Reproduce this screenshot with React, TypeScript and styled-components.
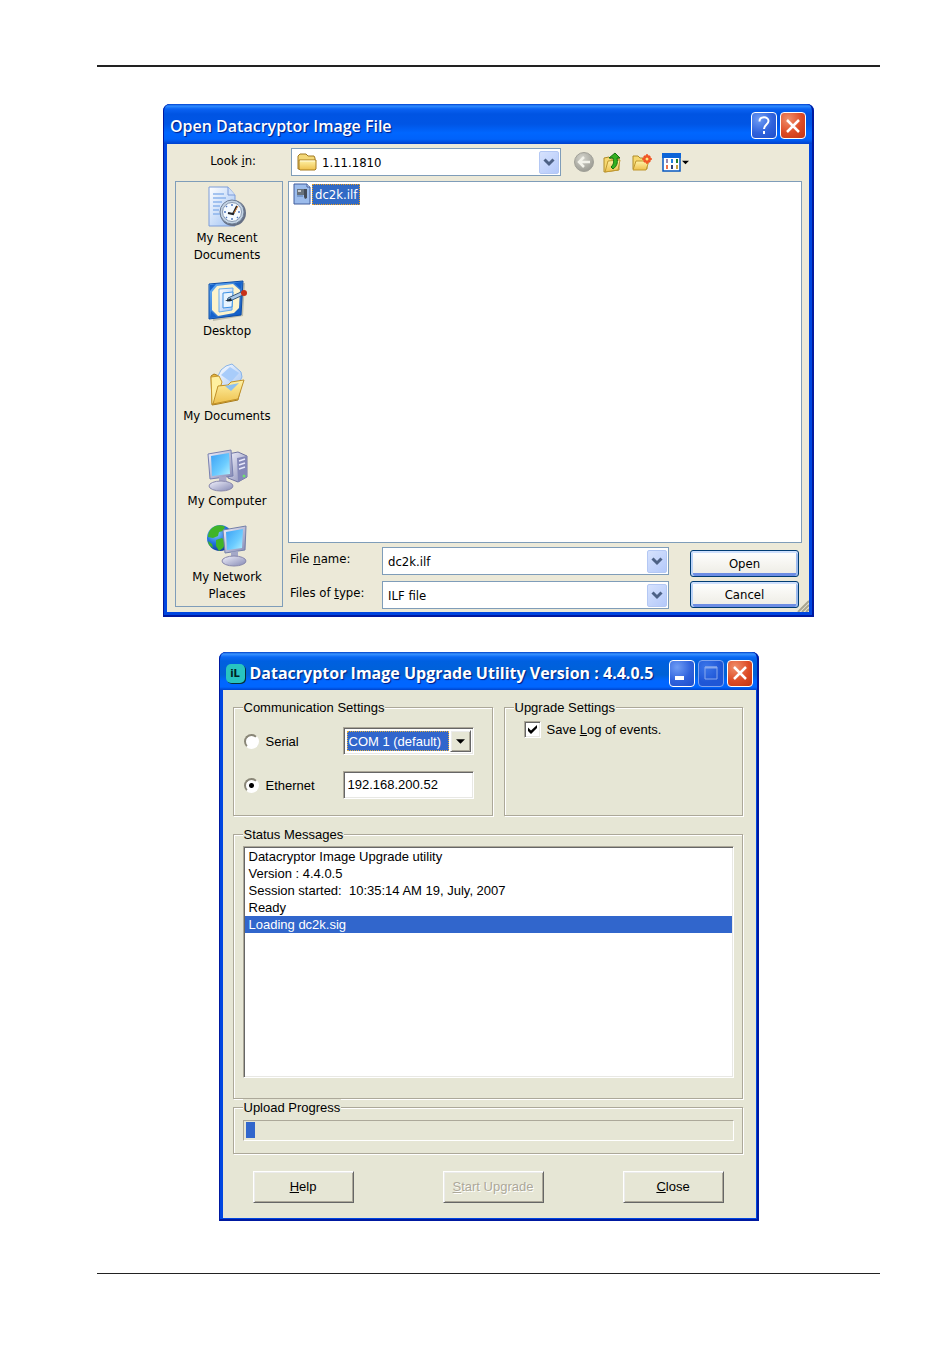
import React, { useState } from "react";
import styled, { createGlobalStyle, css } from "styled-components";

const GlobalStyle = createGlobalStyle`
  * { box-sizing: border-box; }
  body { margin: 0; background: #fff; color: #000; }
  button, input, select { font: inherit; color: inherit; margin: 0; }
`;

const tahoma = `"DejaVu Sans Condensed", "DejaVu Sans", sans-serif`;
const msSans = `"Liberation Sans", Arial, sans-serif`;

/* ---------- page ---------- */

const Page = styled.main`
  display: flex;
  flex-direction: column;
  align-items: center;
  padding: 65px 70px 86px 97px;
`;

const Rule = styled.hr`
  width: 100%;
  height: 2px;
  margin: 0;
  border: 0;
  background: #222;
`;

const BottomRule = styled(Rule)`
  height: 1px;
  margin-top: 52px;
`;

/* ---------- window chrome ---------- */

const Window = styled.section<{ $width: number; $gap: number; $edge: number }>`
  display: flex;
  flex-direction: column;
  position: relative;
  width: 100%;
  max-width: ${(p) => p.$width}px;
  margin-top: ${(p) => p.$gap}px;
  border: solid #0046e0;
  border-width: 0 ${(p) => p.$edge}px ${(p) => p.$edge}px 4px;
  border-radius: 7px 7px 0 0;
  background: #0046e0;

  &::after {
    content: "";
    position: absolute;
    inset: 0 -${(p) => p.$edge}px -${(p) => p.$edge}px -4px;
    border: solid #0019a0;
    border-width: 0 2px 2px 1px;
    border-radius: 7px 7px 0 0;
    pointer-events: none;
  }

  > header { margin: 0 -${(p) => p.$edge}px 0 -4px; }
`;

const TitleBar = styled.header<{ $height: number; $flat?: boolean }>`
  display: flex;
  align-items: center;
  gap: 3px;
  height: ${(p) => p.$height}px;
  padding: ${(p) => (p.$flat ? "4px 6px 0 7px" : "3px 8px 0 7px")};
  border-radius: 7px 7px 0 0;
  background: ${(p) =>
    p.$flat
      ? "linear-gradient(#0040c8 0, #3a94ff 2px, #0a68f4 5px, #0060e0 9px, #0062d6 60%, #0066ff 76%, #0066ff 92%, #0044cc)"
      : "linear-gradient(#0040d0 0, #2f8cff 2px, #0a62f2 5px, #0054e3 10px, #0055e5 50%, #0066ff 72%, #0062fa 88%, #0040cc)"};
`;

const Title = styled.h1<{ $weight: number }>`
  flex: 1;
  margin: 0;
  font: ${(p) => p.$weight} 16px/24px "Open Sans", sans-serif;
  color: #fff;
  text-shadow: 1px 1px 1px #001a80;
  white-space: nowrap;
`;

const captionTones = {
  blue: "radial-gradient(circle at 30% 25%, #6f9df5, #2f62dc 55%, #1f4ecb)",
  dim: "radial-gradient(circle at 30% 25%, #3b76ea, #1f56d6 60%)",
  red: "radial-gradient(circle at 30% 25%, #f0906c, #dd4b25 55%, #c23414)",
};

const CaptionButton = styled.button<{ $tone: keyof typeof captionTones }>`
  display: grid;
  place-items: center;
  width: 26px;
  height: 27px;
  padding: 0;
  border: 1px solid ${(p) => (p.$tone === "dim" ? "#7fa4f0" : "#fff")};
  border-radius: 4px;
  background: ${(p) => captionTones[p.$tone]};
`;

/* ---------- open dialog ---------- */

const OpenBody = styled.form`
  display: grid;
  grid-template-columns: 108px minmax(0, 1fr);
  grid-template-rows: 37px 426px;
  column-gap: 5px;
  padding: 0 7px 5px 8px;
  background: #ece9d8;
  font: 13px/17px ${tahoma};
`;

const LookLabel = styled.label`
  align-self: center;
  padding: 0 27px 4px 0;
  text-align: right;
`;

const LookRow = styled.div`
  display: flex;
  align-items: center;
  padding: 0 0 1px 3px;
`;

const Field = styled.div`
  display: flex;
  align-items: center;
  width: 287px;
  height: 28px;
  padding: 1px 1px 1px 5px;
  border: 1px solid #7f9db9;
  background: #fff;

  input, select {
    flex: 1;
    min-width: 0;
    height: 24px;
    padding: 0;
    border: 0;
    outline: 0;
    background: transparent;
    appearance: none;
  }
`;

const LookField = styled(Field)`
  width: 270px;
  select { padding-left: 5px; }
`;

const DropArrow = styled.span`
  display: grid;
  place-items: center;
  width: 20px;
  height: 23px;
  border: 1px solid #b4c8f4;
  border-radius: 2px;
  background: linear-gradient(135deg, #d6e2fd, #b4c9fa);
`;

const Tools = styled.div`
  display: flex;
  align-items: center;
  gap: 9px;
  margin-left: 13px;
`;

const ToolButton = styled.button`
  display: flex;
  align-items: center;
  gap: 1px;
  padding: 0;
  border: 0;
  background: none;
`;

const Places = styled.nav`
  display: grid;
  grid-template-rows: repeat(5, 1fr);
  border: 1px solid #7f9db9;
`;

const Place = styled.a`
  display: flex;
  flex-direction: column;
  align-items: center;
  justify-content: center;
  padding: 0 12px 1px 8px;
  color: #000;
  text-align: center;
  text-decoration: none;

  svg { flex: none; }
  span { margin: 0 -8px; }
`;

const Main = styled.div`
  display: grid;
  grid-template-rows: 362px auto;
  row-gap: 4px;
`;

const FileList = styled.ul`
  margin: 0;
  padding: 1px 4px;
  border: 1px solid #7f9db9;
  background: #fff;
  list-style: none;
`;

const FileItem = styled.button`
  display: flex;
  align-items: center;
  gap: 1px;
  padding: 0;
  border: 0;
  background: none;
  color: #fff;

  span {
    height: 21px;
    padding: 1px 2px;
    border: 1px dotted #f0a020;
    background: #316ac5;
  }
`;

const Footer = styled.div`
  display: flex;
  justify-content: space-between;
  padding: 0 3px 0 2px;
`;

const Fields = styled.div`
  display: grid;
  grid-template-columns: 92px 287px;
  row-gap: 6px;
  label { padding-top: 3px; white-space: nowrap; }
`;

const Actions = styled.div`
  display: flex;
  flex-direction: column;
  gap: 4px;
  padding-top: 3px;
`;

const XpButton = styled.button`
  width: 109px;
  height: 27px;
  padding: 0;
  border: 1px solid #003c74;
  border-radius: 3px;
  background: linear-gradient(#fff, #f4f3ee 60%, #ecebe4);
  box-shadow: inset 0 2px #cfe0fd, inset 2px 0 #bcd4f8, inset -2px 0 #9dbbee, inset 0 -3px #6d8de4;
`;

const Grip = styled.svg`
  position: absolute;
  right: 0;
  bottom: 0;
`;

/* ---------- upgrade utility ---------- */

const UtilityBody = styled.form`
  display: flex;
  flex-direction: column;
  padding: 9px 13px 15px 10px;
  background: #e6e6d5;
  font: 13px/17px ${msSans};
`;

const Columns = styled.div`
  display: grid;
  grid-template-columns: 260px minmax(0, 1fr);
  gap: 11px;
  margin-bottom: 10px;
`;

const Group = styled.fieldset`
  min-width: 0;
  margin: 0;
  padding: 0 8px 0 9px;
  border: 1px solid #aca899;
  box-shadow: 1px 1px #fff, inset 1px 1px #fff;

  legend {
    padding: 0 1px;
    background: #e6e6d5;
    line-height: 17px;
  }
`;

const SettingsGroup = styled(Group)`height: 117px;`;
const StatusGroup = styled(Group)`padding-bottom: 20px;`;
const ProgressGroup = styled(Group)`padding-bottom: 12px;`;

const CommGrid = styled.div`
  display: grid;
  grid-template-columns: 100px 131px;
  row-gap: 16px;
  align-items: center;
  padding-top: 11px;
`;

const Choice = styled.label`
  display: flex;
  align-items: center;
  gap: 7px;
  padding-left: 1px;
`;

const CheckChoice = styled(Choice)`
  gap: 6px;
  padding: 5px 10px;
`;

const sunken = css`
  border: 1px solid;
  border-color: #aca899 #fff #fff #aca899;
  box-shadow: inset 1px 1px #666, inset -1px -1px #e8e8e4;
`;

const Radio = styled.input`
  appearance: none;
  width: 15px;
  height: 15px;
  border: 2px solid;
  border-color: #8a8778 #fff #fff #8a8778;
  border-radius: 50%;
  background: #fff;

  &:checked { background: radial-gradient(circle, #000 2px, #fff 3px); }
`;

const Check = styled.input`
  appearance: none;
  width: 17px;
  height: 17px;
  ${sunken}
  background: #fff;

  &:checked {
    background: #fff url("data:image/svg+xml,%3Csvg xmlns='http://www.w3.org/2000/svg' viewBox='0 0 15 15'%3E%3Cpath d='M3 5.5v3.5l3 3 6-6V3L6 8.5z'/%3E%3C/svg%3E") center / 15px 15px;
  }
`;

const SunkenBox = styled.div`
  display: flex;
  height: 28px;
  padding: 2px;
  ${sunken}
  background: #fff;

  input, select {
    flex: 1;
    min-width: 0;
    padding: 0 2px 2px;
    border: 0;
    outline: 0;
    background: transparent;
    appearance: none;
  }
  select {
    margin: 1px;
    padding: 0 1px;
    border: 1px dotted #e0b040;
    background: #3166cc;
    color: #fff;
  }
`;

const raised = css`
  border: 1px solid;
  border-color: #fff #666 #666 #fff;
  background: #e6e6d5;
  box-shadow: inset 1px 1px #ebebeb, inset -1px -1px #aca899;
`;

const ClassicArrow = styled.span`
  display: grid;
  place-items: center;
  width: 21px;
  ${raised}
`;

const MessageList = styled.ul`
  height: 232px;
  margin: 3px 0 0;
  padding: 1px;
  ${sunken}
  background: #fff;
  list-style: none;
`;

const Message = styled.li<{ $selected: boolean }>`
  height: 17px;
  padding: 0 4px;
  line-height: 17px;
  white-space: pre;
  background: ${(p) => (p.$selected ? "#3166cc" : "transparent")};
  color: ${(p) => (p.$selected ? "#fff" : "#000")};
`;

const Meter = styled.progress`
  display: block;
  appearance: none;
  width: 100%;
  height: 21px;
  margin-top: 4px;
  padding: 1px 2px 2px;
  border: 1px solid;
  border-color: #aca899 #fff #fff #aca899;
  background: transparent;

  &::-webkit-progress-bar { background: transparent; }
  &::-webkit-progress-value { background: #3166cc; }
`;

const ButtonRow = styled.div`
  display: grid;
  grid-template-columns: 190px 180px auto;
  margin-top: 17px;
  padding-left: 20px;
`;

const ClassicButton = styled.button`
  width: 101px;
  height: 32px;
  padding: 0 0 2px;
  ${raised}

  &:disabled { color: #aca899; text-shadow: 1px 1px #fff; }
`;

/* ---------- icons ---------- */

const Gradients = () => (
  <svg width="0" height="0" style={{ display: "block" }} aria-hidden="true">
    <defs>
      <linearGradient id="paper" x1="0" y1="0" x2="1" y2="1">
        <stop offset="0" stopColor="#fff" /><stop offset="1" stopColor="#9cc0f4" />
      </linearGradient>
      <linearGradient id="folder" x1="0" y1="0" x2="0" y2="1">
        <stop offset="0" stopColor="#fff3a8" /><stop offset="1" stopColor="#eec04c" />
      </linearGradient>
      <linearGradient id="screen" x1="0" y1="0" x2="1" y2="1">
        <stop offset="0" stopColor="#3aa0f4" /><stop offset=".6" stopColor="#6cccff" /><stop offset="1" stopColor="#b4f0ff" />
      </linearGradient>
      <linearGradient id="metal" x1="0" y1="0" x2="1" y2="1">
        <stop offset="0" stopColor="#f2f2fc" /><stop offset="1" stopColor="#8488b4" />
      </linearGradient>
      <linearGradient id="blotter" x1="0" y1="0" x2="1" y2="1">
        <stop offset="0" stopColor="#6cb4f8" /><stop offset="1" stopColor="#0a50b8" />
      </linearGradient>
      <radialGradient id="globe" cx=".35" cy=".3" r=".8">
        <stop offset="0" stopColor="#8cd0ff" /><stop offset=".5" stopColor="#2474e0" /><stop offset="1" stopColor="#0a2c90" />
      </radialGradient>
      <radialGradient id="grey" cx=".4" cy=".3" r=".8">
        <stop offset="0" stopColor="#d4d4cc" /><stop offset="1" stopColor="#94948c" />
      </radialGradient>
    </defs>
  </svg>
);

const PlaceIcon = ({ children }: { children: React.ReactNode }) => (
  <svg width="44" height="44" viewBox="0 0 44 44" aria-hidden="true">{children}</svg>
);

const RecentIcon = () => (
  <PlaceIcon>
    <path d="M4 2h19l7 8v31H4z" fill="url(#paper)" stroke="#7c9cd8" />
    <path d="M23 2v8h7" fill="#cfe0fa" stroke="#7c9cd8" />
    <path d="M8 9h11M8 13h13M8 17h9M8 21h7M8 25h6M8 29h7" stroke="#8cb4ec" strokeWidth="1.5" />
    <circle cx="28" cy="28" r="13" fill="#667084" />
    <circle cx="27" cy="27" r="12" fill="#c4d4e4" stroke="#708098" />
    <circle cx="27" cy="27" r="9.5" fill="#f4faff" stroke="#8898b0" />
    <path d="M27 19v2M27 33v2M19 27h2M33 27h2M21 21l1 1M32 32l1 1M21 33l1-1" stroke="#5078c0" strokeWidth="1.5" />
    <path d="M23 28l5 1 4-8" fill="none" stroke="#20242c" strokeWidth="2" />
    <path d="M33 21l-4 7" stroke="#e08838" />
  </PlaceIcon>
);

const DesktopIcon = () => (
  <PlaceIcon>
    <path d="M6 8l34-3-2 33-30 5z" fill="#a8a898" opacity=".7" />
    <path d="M4 6l34-3-2 34-32 4z" fill="url(#blotter)" stroke="#0a4ca8" />
    <path d="M5 7l6-1-6 7zM37 4l-1 7-7-6zM5 40l1-7 6 6zM35 36l-7 1 7-6z" fill="#1462cc" />
    <path d="M12 8l16-2 7 6-1 18-5 5-16 3-6-6V14z" fill="#fdf4cc" />
    <path d="M14 11l14-1-1 22-13 2z" fill="url(#paper)" stroke="#68acec" />
    <path d="M18 15l10-1-1 15-9 1z" fill="#e8f4ff" stroke="#3c90e4" />
    <path d="M23 20l13-6 2 3-13 6h-3z" fill="#a8c8e8" stroke="#385878" />
    <path d="M20 23l6-3 1 3z" fill="#182838" />
    <circle cx="39" cy="15" r="3" fill="#c83018" />
  </PlaceIcon>
);

const DocumentsIcon = () => (
  <PlaceIcon>
    <path d="M6 13l3-2 5 2 1 4 18-1 4 3-4 18-20 4-6 1z" fill="#e8b83c" stroke="#a87c20" />
    <path d="M13 13l3-6 5-4 6-2 9 8 1 5-5 10-13 5z" fill="url(#paper)" stroke="#88b4e8" />
    <path d="M16 12l9-8 9 6-8 9z" fill="#a8ccfa" />
    <path d="M6 14l8-1 3 6-7 21-3 1z" fill="#fff0a0" stroke="#c89830" />
    <path d="M13 23l10-1 3-3 13-2-6 19-25 5z" fill="url(#folder)" stroke="#c09028" />
    <path d="M20 23l14-3-8 8z" fill="#8cc0f0" />
  </PlaceIcon>
);

const ComputerIcon = () => (
  <PlaceIcon>
    <path d="M23 6l10-2 9 4v21l-9 5-10-4z" fill="url(#metal)" stroke="#7074a0" />
    <path d="M32 10l10-2v21l-9 5z" fill="#8488b8" />
    <path d="M34 13l6-2M34 17l6-2M34 21l6-2" stroke="#e8e8fa" strokeWidth="1.5" />
    <circle cx="39" cy="28" r="1.500" fill="#70e070" />
    <path d="M3 6l23-4 2 26-23 3z" fill="url(#metal)" stroke="#7880b0" />
    <path d="M6 8l18-3 1 21-18 2z" fill="url(#screen)" />
    <path d="M14 29l7-1 1 8h-8z" fill="#a8a8c8" />
    <ellipse cx="16" cy="38" rx="12" ry="5" fill="url(#metal)" stroke="#8888ac" />
  </PlaceIcon>
);

const NetworkIcon = () => (
  <PlaceIcon>
    <circle cx="15" cy="14" r="13" fill="url(#globe)" />
    <path d="M6 5c5-5 12-4 14-2l-2 4-4 1-1 4-5 2-5-1c0-3 1-6 3-8zM11 16l6-2 4 4-3 6-4 3-3-5zM3 17l4 3 1 4-4-3z" fill="#40b428" />
    <path d="M18 6l23-4-1 24-20 3z" fill="url(#metal)" stroke="#7480a8" />
    <path d="M21 8l17-3-1 19-15 2z" fill="url(#screen)" />
    <path d="M26 28l7-1v8h-7z" fill="#a4a8c8" />
    <ellipse cx="29" cy="37" rx="12" ry="5" fill="url(#metal)" stroke="#8888ac" />
  </PlaceIcon>
);

const FolderIcon = () => (
  <svg width="20" height="18" viewBox="0 0 20 18" aria-hidden="true">
    <path d="M1 3l2-2h6l2 2h6l1 2v11H1z" fill="#f4d878" stroke="#a07820" />
    <path d="M2 7h17v9l-1 1H3l-1-1z" fill="url(#folder)" stroke="#a87c20" />
    <path d="M3 8h15" stroke="#fffbe0" />
  </svg>
);

const FileIcon = () => (
  <svg width="18" height="22" viewBox="0 0 18 22" aria-hidden="true">
    <path d="M1 1h13l3 3v17H1z" fill="#9cbcec" stroke="#405c9c" />
    <path d="M14 1v3h3" fill="#dce8fa" stroke="#405c9c" />
    <path d="M4 6h7v6H4z" fill="#68727c" /><path d="M5 7h3v2H5z" fill="#c8ccd0" />
    <path d="M11 6h3v9l-2 1-1-2z" fill="#444c58" /><path d="M4 13h6" stroke="#5478b0" />
  </svg>
);

const Chevron = () => (
  <svg width="12" height="9" viewBox="0 0 12 9" aria-hidden="true">
    <path d="M1.5 1.5L6 6l4.500-4.500" fill="none" stroke="#4d6185" strokeWidth="3" />
  </svg>
);

const Triangle = ({ width }: { width: number }) => (
  <svg width={width} height="5" viewBox="0 0 8 4" aria-hidden="true"><path d="M0 0h8L4 4z" /></svg>
);

const BackIcon = () => (
  <svg width="20" height="20" viewBox="0 0 20 20" aria-hidden="true">
    <circle cx="10" cy="10" r="9.500" fill="url(#grey)" stroke="#a0a098" />
    <path d="M16 10H6M10 5l-5 5 5 5" fill="none" stroke="#f2f2ea" strokeWidth="2.500" />
  </svg>
);

const UpIcon = () => (
  <svg width="20" height="21" viewBox="0 0 20 21" aria-hidden="true">
    <path d="M1 6l5-1 2 2 8-1v12L1 20z" fill="#f6d870" stroke="#b08c28" />
    <path d="M2 20l3-11 12-1-2 10z" fill="url(#folder)" stroke="#c09830" />
    <path d="M6 6l6-5 5 5h-3c1 5 0 8-4 11l-2-2c3-3 3-5 2-9z" fill="#34b020" stroke="#147010" />
  </svg>
);

const NewFolderIcon = () => (
  <svg width="21" height="18" viewBox="0 0 21 18" aria-hidden="true">
    <path d="M1 3h5l2 2h7v11H1z" fill="#f6d870" stroke="#b08c28" />
    <path d="M1 17L4 8h13l-3 9z" fill="url(#folder)" stroke="#c09830" />
    <circle cx="15" cy="6" r="4" fill="#f46838" />
    <path d="M15 1v10M10 6h10M12 3l6 6M18 3l-6 6" stroke="#f05020" strokeWidth="1.500" />
    <circle cx="15" cy="6" r="1.500" fill="#ffe880" />
  </svg>
);

const ViewsIcon = () => (
  <svg width="19" height="19" viewBox="0 0 19 19" aria-hidden="true">
    <path d="M1 1h17v17H1z" fill="#fff" stroke="#0858c0" strokeWidth="1.500" />
    <path d="M0 0h19v5H0z" fill="#0c64d8" />
    <path d="M4 6h2v4H4z" fill="#9888b0" /><path d="M9 6h2v4H9z" fill="#2080e0" /><path d="M14 6h2v4h-2z" fill="#208030" />
    <path d="M4 12h2v4H4z" fill="#f07048" /><path d="M9 12h2v4H9z" fill="#304078" /><path d="M14 12h2v4h-2z" fill="#c8a040" />
  </svg>
);

const HelpGlyph = () => (
  <svg width="16" height="19" viewBox="0 0 16 19" aria-hidden="true">
    <path d="M3.500 5.500C3.500 0 12.500 0 12.500 5c0 3.500-4.500 3.500-4.500 8" fill="none" stroke="#fff" strokeWidth="2" />
    <path d="M7 15h2v3H7z" fill="#fff" />
  </svg>
);

const CloseGlyph = () => (
  <svg width="16" height="16" viewBox="0 0 16 16" aria-hidden="true">
    <path d="M2 2l12 12M14 2L2 14" stroke="#fff" strokeWidth="2.500" />
  </svg>
);

const MinimizeGlyph = () => (
  <svg width="16" height="16" viewBox="0 0 16 16" aria-hidden="true"><path d="M1 11h9v4H1z" fill="#fff" /></svg>
);

const MaximizeGlyph = () => (
  <svg width="16" height="16" viewBox="0 0 16 16" aria-hidden="true">
    <path d="M2 2h12v12H2z" fill="none" stroke="#88a8ec" /><path d="M2 2.500h12" stroke="#88a8ec" strokeWidth="2" />
  </svg>
);

const AppBadge = styled.span`
  display: grid;
  place-items: center;
  width: 19px;
  height: 19px;
  margin-right: 2px;
  border-radius: 5px;
  background: #28c4c0;
  box-shadow: 1px 1px #063038;
  color: #022;
  font: bold 11px/19px ${tahoma};
`;

/* ---------- content ---------- */

const places = [
  { name: "My Recent Documents", Icon: RecentIcon },
  { name: "Desktop", Icon: DesktopIcon },
  { name: "My Documents", Icon: DocumentsIcon },
  { name: "My Computer", Icon: ComputerIcon },
  { name: "My Network Places", Icon: NetworkIcon },
];

const messages = [
  "Datacryptor Image Upgrade utility",
  "Version : 4.4.0.5",
  "Session started:  10:35:14 AM 19, July, 2007",
  "Ready",
  "Loading dc2k.sig",
];

const OpenDialog = () => (
  <Window $width={651} $gap={37} $edge={5}>
    <TitleBar $height={40}>
      <Title $weight={600}>Open Datacryptor Image File</Title>
      <CaptionButton $tone="blue" aria-label="Help"><HelpGlyph /></CaptionButton>
      <CaptionButton $tone="red" aria-label="Close"><CloseGlyph /></CaptionButton>
    </TitleBar>
    <OpenBody onSubmit={(e) => e.preventDefault()}>
      <LookLabel htmlFor="look">Look <u>i</u>n:</LookLabel>
      <LookRow>
        <LookField>
          <FolderIcon />
          <select id="look"><option>1.11.1810</option></select>
          <DropArrow><Chevron /></DropArrow>
        </LookField>
        <Tools>
          <ToolButton type="button" aria-label="Back"><BackIcon /></ToolButton>
          <ToolButton type="button" aria-label="Up one level"><UpIcon /></ToolButton>
          <ToolButton type="button" aria-label="New folder"><NewFolderIcon /></ToolButton>
          <ToolButton type="button" aria-label="Views"><ViewsIcon /><Triangle width={7} /></ToolButton>
        </Tools>
      </LookRow>
      <Places>
        {places.map(({ name, Icon }) => (
          <Place href="#" key={name}><Icon /><span>{name}</span></Place>
        ))}
      </Places>
      <Main>
        <FileList>
          <li><FileItem type="button"><FileIcon /><span>dc2k.ilf</span></FileItem></li>
        </FileList>
        <Footer>
          <Fields>
            <label htmlFor="name">File <u>n</u>ame:</label>
            <Field><input id="name" defaultValue="dc2k.ilf" /><DropArrow><Chevron /></DropArrow></Field>
            <label htmlFor="type">Files of <u>t</u>ype:</label>
            <Field><select id="type"><option>ILF file</option></select><DropArrow><Chevron /></DropArrow></Field>
          </Fields>
          <Actions>
            <XpButton>Open</XpButton>
            <XpButton type="button">Cancel</XpButton>
          </Actions>
        </Footer>
      </Main>
    </OpenBody>
    <Grip width="12" height="12" viewBox="0 0 12 12" aria-hidden="true">
      <path d="M1 12L12 1M5 12l7-7M9 12l3-3" stroke="#a8a590" strokeWidth="2" />
    </Grip>
  </Window>
);

const UpgradeUtility = () => {
  const [link, setLink] = useState("ethernet");
  return (
    <Window $width={540} $gap={35} $edge={3}>
      <TitleBar $height={38} $flat>
        <AppBadge>iL</AppBadge>
        <Title $weight={700}>Datacryptor Image Upgrade Utility Version : 4.4.0.5</Title>
        <CaptionButton $tone="blue" aria-label="Minimize"><MinimizeGlyph /></CaptionButton>
        <CaptionButton $tone="dim" aria-label="Maximize"><MaximizeGlyph /></CaptionButton>
        <CaptionButton $tone="red" aria-label="Close"><CloseGlyph /></CaptionButton>
      </TitleBar>
      <UtilityBody onSubmit={(e) => e.preventDefault()}>
        <Columns>
          <SettingsGroup>
            <legend>Communication Settings</legend>
            <CommGrid>
              <Choice>
                <Radio type="radio" name="link" checked={link === "serial"} onChange={() => setLink("serial")} />
                Serial
              </Choice>
              <SunkenBox>
                <select aria-label="Serial port"><option>COM 1 (default)</option></select>
                <ClassicArrow><Triangle width={9} /></ClassicArrow>
              </SunkenBox>
              <Choice>
                <Radio type="radio" name="link" checked={link === "ethernet"} onChange={() => setLink("ethernet")} />
                Ethernet
              </Choice>
              <SunkenBox><input aria-label="Ethernet address" defaultValue="192.168.200.52" /></SunkenBox>
            </CommGrid>
          </SettingsGroup>
          <SettingsGroup>
            <legend>Upgrade Settings</legend>
            <CheckChoice>
              <Check type="checkbox" defaultChecked />
              <span>Save <u>L</u>og of events.</span>
            </CheckChoice>
          </SettingsGroup>
        </Columns>
        <StatusGroup>
          <legend>Status Messages</legend>
          <MessageList>
            {messages.map((text, i) => (
              <Message key={text} $selected={i === messages.length - 1}>{text}</Message>
            ))}
          </MessageList>
        </StatusGroup>
        <ProgressGroup>
          <legend>Upload Progress</legend>
          <Meter value={2} max={100} aria-label="Upload Progress" />
        </ProgressGroup>
        <ButtonRow>
          <ClassicButton type="button"><u>H</u>elp</ClassicButton>
          <ClassicButton type="button" disabled><u>S</u>tart Upgrade</ClassicButton>
          <ClassicButton type="button"><u>C</u>lose</ClassicButton>
        </ButtonRow>
      </UtilityBody>
    </Window>
  );
};

export default function App() {
  return (
    <Page>
      <GlobalStyle />
      <Gradients />
      <Rule />
      <OpenDialog />
      <UpgradeUtility />
      <BottomRule />
    </Page>
  );
}
